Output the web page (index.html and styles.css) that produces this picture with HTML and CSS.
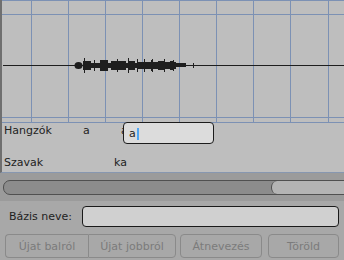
FILE: index.html
```html
<!DOCTYPE html>
<html lang="hu">
<head>
    <meta charset="UTF-8">
    <title>Hangzók</title>
    <link rel="stylesheet" href="styles.css">
</head>
<body>
    <!-- hullámforma és a címke sávok -->
    <div class="viewer">
        <svg class="grid" width="342" height="123" viewBox="0 0 342 123">
            <g fill="#7c91b4">
                <rect x="0" y="0" width="342" height="1"/>
                <rect x="0" y="14" width="342" height="1"/>
                <rect x="0" y="117" width="342" height="1"/>
                <rect x="0" y="122" width="342" height="1"/>
                <rect x="29" y="0" width="1" height="122"/>
                <rect x="66" y="0" width="1" height="122"/>
                <rect x="103" y="0" width="1" height="122"/>
                <rect x="140" y="0" width="1" height="122"/>
                <rect x="177" y="0" width="1" height="122"/>
                <rect x="214" y="0" width="1" height="122"/>
                <rect x="251" y="0" width="1" height="122"/>
                <rect x="288" y="0" width="1" height="122"/>
                <rect x="326" y="0" width="1" height="122"/>
            </g>
            <g fill="#1e1e1e">
                <rect x="1" y="65" width="341" height="1"/>
                <ellipse cx="76.5" cy="65.5" rx="4" ry="3.5"/>
                <rect x="81" y="61" width="8" height="9"/>
                <rect x="82" y="58" width="1" height="15"/>
                <rect x="89" y="63" width="3" height="5"/>
                <rect x="92" y="60" width="1" height="11"/>
                <rect x="93" y="63" width="5" height="5"/>
                <rect x="98" y="60" width="8" height="11"/>
                <rect x="106" y="63" width="3" height="5"/>
                <rect x="109" y="61" width="6" height="9"/>
                <rect x="115" y="59" width="1" height="13"/>
                <rect x="116" y="61" width="8" height="9"/>
                <rect x="124" y="63" width="2" height="5"/>
                <rect x="126" y="58" width="1" height="15"/>
                <rect x="127" y="61" width="6" height="9"/>
                <rect x="133" y="63" width="2" height="5"/>
                <rect x="135" y="59" width="1" height="13"/>
                <rect x="136" y="62" width="6" height="7"/>
                <rect x="142" y="59" width="1" height="13"/>
                <rect x="143" y="62" width="6" height="7"/>
                <rect x="149" y="60" width="1" height="11"/>
                <rect x="150" y="59" width="1" height="13"/>
                <rect x="151" y="62" width="5" height="7"/>
                <rect x="156" y="61" width="6" height="9"/>
                <rect x="162" y="59" width="1" height="13"/>
                <rect x="163" y="62" width="5" height="7"/>
                <rect x="168" y="61" width="3" height="9"/>
                <rect x="171" y="60" width="1" height="11"/>
                <rect x="172" y="62" width="2" height="7"/>
                <rect x="174" y="63" width="10" height="4"/>
                <rect x="191" y="63" width="1" height="5"/>
            </g>
        </svg>
        <div class="tier">
            <span class="tier-name">Hangzók</span>
            <span class="seg seg-first">a</span>
            <span class="seg">a</span>
            <div class="editor"><span>a</span><span class="caret"></span></div>
        </div>
        <div class="tier tier-words">
            <span class="tier-name">Szavak</span>
            <span class="seg seg-word">ka</span>
        </div>
    </div>

    <!-- görgetősáv -->
    <div class="timebar">
        <div class="scroll">
            <div class="scroll-fill"></div>
            <div class="scroll-thumb"></div>
        </div>
    </div>

    <div class="form">
        <div class="name-row">
            <label class="name-label">Bázis neve:</label>
            <div class="name-input"></div>
        </div>
        <div class="buttons">
            <div class="btn-group">
                <button class="btn btn-left">Újat balról</button>
                <button class="btn btn-right">Újat jobbról</button>
            </div>
            <button class="btn btn-rename">Átnevezés</button>
            <button class="btn btn-delete">Töröld</button>
        </div>
    </div>
</body>
</html>
```

FILE: styles.css
```css
html, body { margin: 0; padding: 0; }
body {
    width: 344px;
    height: 260px;
    overflow: hidden;
    background: #a8a8a8;
    font-family: "DejaVu Sans", sans-serif;
    font-size: 11px;
    color: #222;
}

/* felső rész: hullámforma + sávok */
.viewer {
    background: #bebebe;
    border-left: 2px solid #6f6f6f;
    border-bottom: 1px solid #8797b0;
    padding-bottom: 1px;
}
.grid { display: block; }

.tier {
    position: relative;
    display: flex;
    height: 16px;
    line-height: 16px;
    padding-left: 2px;
}
.tier-words { margin-top: 16px; }
.tier-name { width: 79px; }
.seg-first { width: 38px; }
.seg-word { margin-left: 31px; }

.editor {
    position: absolute;
    left: 121px;
    top: -1px;
    width: 91px;
    height: 22px;
    box-sizing: border-box;
    border: 1px solid #1c1c1c;
    border-radius: 4px;
    background: #dcdcdc;
    padding: 2px 0 0 5px;
    line-height: 18px;
    display: flex;
    align-items: center;
}
.caret {
    display: inline-block;
    width: 2px;
    height: 12px;
    margin-left: 1px;
    background: #4ea6f5;
}

/* görgetősáv */
.timebar {
    background: #9b9b9b;
    padding: 7px 0 6px 3px;
}
.scroll {
    display: flex;
    height: 15px;
    margin-right: -10px;
    box-sizing: border-box;
    border: 1px solid #505050;
    border-radius: 7px 0 0 7px;
    background: #8c8c8c;
    overflow: hidden;
}
.scroll-fill { flex: 1; }
.scroll-thumb {
    width: 81px;
    background: #b4b4b4;
    border-left: 1px solid #505050;
    border-radius: 6px 0 0 6px;
}

/* alsó űrlap */
.form {
    background: #a8a8a8;
    border-radius: 5px 5px 0 0;
    padding: 5px 5px 0 5px;
}
.name-row {
    display: flex;
    align-items: center;
    height: 21px;
}
.name-label {
    width: 73px;
    padding-left: 4px;
    color: #1e1e1e;
}
.name-input {
    flex: 1;
    height: 21px;
    box-sizing: border-box;
    border: 1px solid #1a1a1a;
    border-radius: 4px;
    background: #d0d0d0;
}

.buttons {
    display: flex;
    margin-top: 7px;
    height: 24px;
}
.btn-group { display: flex; }
.btn {
    height: 24px;
    box-sizing: border-box;
    border: 1px solid #8a8a8a;
    border-radius: 4px;
    background: transparent;
    color: #7b7b7b;
    font-family: "DejaVu Sans", sans-serif;
    font-size: 11px;
    padding: 0;
}
.btn-left {
    width: 83px;
    border-radius: 4px 0 0 4px;
    border-right: none;
}
.btn-right {
    width: 88px;
    border-radius: 0 4px 4px 0;
}
.btn-rename { width: 82px; margin-left: 4px; }
.btn-delete { width: 71px; margin-left: 6px; }
```
